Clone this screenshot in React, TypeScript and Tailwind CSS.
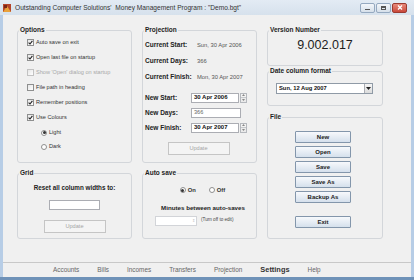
import React from "react";

const font = "font-['Liberation_Sans',Arial,sans-serif]";

const options = [
  { label: "Auto save on exit", checked: true },
  { label: "Open last file on startup", checked: true },
  { label: "Show 'Open' dialog on startup", checked: false, disabled: true },
  { label: "File path in heading", checked: false },
  { label: "Remember positions", checked: true },
  { label: "Use Colours", checked: true },
];

const tabs = ["Accounts", "Bills", "Incomes", "Transfers", "Projection", "Settings", "Help"];

const fileButtons = ["New", "Open", "Save", "Save As", "Backup As"];

export default function App() {
  return (
    <div className={`flex h-[280px] w-[414px] flex-col overflow-hidden bg-[#b7cde6] ${font}`}>
      <TitleBar />
      <div className="mx-[3px] flex flex-1 flex-col bg-[#f0f0f0]">
        <div className="flex flex-1 gap-[10px] pl-[14px] pt-[10px]">
          <div className="flex w-[115px] flex-col gap-[5px]">
            <Group title="Options" className="h-[138px]">
              <div className="flex flex-col">
                {options.map((o) => (
                  <div key={o.label} className="flex h-[15px] items-center gap-[2px] pl-[9px]">
                    <CheckBox checked={o.checked} disabled={o.disabled} />
                    <span className={`text-[5.6px] ${o.disabled ? "text-[#a8a8a8]" : "text-[#333]"}`}>
                      {o.label}
                    </span>
                  </div>
                ))}
                <div className="flex h-[15px] items-center gap-[2px] pl-[23px]">
                  <Radio checked />
                  <span className="text-[5.6px] text-[#333]">Light</span>
                </div>
                <div className="flex h-[13px] items-center gap-[2px] pl-[23px]">
                  <Radio />
                  <span className="text-[5.6px] text-[#333]">Dark</span>
                </div>
              </div>
            </Group>
            <Group title="Grid" className="h-[71px]">
              <div className="flex flex-col items-center">
                <span className="mt-[5px] text-[6.3px] leading-[10px] font-bold text-[#222]">
                  Reset all column widths to:
                </span>
                <div className="mt-[7px] h-[10px] w-[51px] border border-[#abadb3] bg-white" />
                <DisabledButton label="Update" />
              </div>
            </Group>
          </div>

          <div className="flex w-[115px] flex-col gap-[5px]">
            <Group title="Projection" className="h-[138px]">
              <div className="grid grid-cols-[46px_1fr] pl-[2px] pt-[2px]">
                <Label>Current Start:</Label>
                <Value>Sun, 30 Apr 2006</Value>
                <Label>Current Days:</Label>
                <Value>366</Value>
                <Label>Current Finish:</Label>
                <Value>Mon, 30 Apr 2007</Value>
              </div>
              <div className="mt-[5px] grid grid-cols-[46px_1fr] pl-[2px]">
                <Label short>New Start:</Label>
                <div className="flex h-[15px] items-center">
                  <DateInput value="30 Apr 2006" />
                </div>
                <Label short>New Days:</Label>
                <div className="flex h-[15px] items-center">
                  <div className="flex h-[10px] w-[50px] items-center border border-[#abadb3] bg-white pl-[2px] text-[5.6px] text-[#666]">
                    366
                  </div>
                </div>
                <Label short>New Finish:</Label>
                <div className="flex h-[15px] items-center">
                  <DateInput value="30 Apr 2007" />
                </div>
              </div>
              <div className="flex justify-center pr-[2px]">
                <div className="mt-[7px] flex h-[13px] w-[62px] items-center justify-center border border-[#c5c5c5] bg-[#f4f4f4] text-[5.6px] text-[#a5a5a5]">
                  Update
                </div>
              </div>
            </Group>
            <Group title="Auto save" className="h-[71px]">
              <div className="flex flex-col items-center">
                <div className="mt-[8px] flex items-center gap-[13px] pl-[6px]">
                  <div className="flex items-center gap-[2px]">
                    <Radio checked />
                    <span className="text-[5.8px] font-bold text-[#333]">On</span>
                  </div>
                  <div className="flex items-center gap-[2px]">
                    <Radio />
                    <span className="text-[5.8px] font-bold text-[#333]">Off</span>
                  </div>
                </div>
                <span className="mt-[9px] pl-[7px] text-[6.2px] leading-[8px] font-bold text-[#222]">
                  Minutes between auto-saves
                </span>
                <div className="mt-[4px] flex items-center gap-[4px] self-start pl-[12px]">
                  <div className="flex h-[10px] w-[42px] items-center justify-end border border-[#d2d4d8] bg-white pr-[1px]">
                    <span className="text-[4px] leading-[4px] text-[#c0c0c0]">⇕</span>
                  </div>
                  <span className="text-[4.6px] text-[#444]">(Turn off to edit)</span>
                </div>
              </div>
            </Group>
          </div>

          <div className="flex w-[116px] flex-col">
            <Group title="Version Number" className="h-[41px]">
              <div className="flex justify-center pt-[2px] text-[12.5px] leading-[16px] text-[#1d1d1d]">
                9.002.017
              </div>
            </Group>
            <Group title="Date column format" className="h-[40px]">
              <div className="mt-[7px] ml-[8px] flex h-[11px] w-[97px] items-center border border-[#8f9aa6] bg-white">
                <span className="flex-1 pl-[2px] text-[5.8px] font-bold text-[#111]">Sun, 12 Aug 2007</span>
                <span className="flex h-full w-[8px] items-center justify-center border-l border-[#abadb3] bg-gradient-to-b from-[#f5f5f5] to-[#dcdcdc]">
                  <svg width="5" height="3" viewBox="0 0 5 3">
                    <path d="M0 0h5L2.5 3z" fill="#222" />
                  </svg>
                </span>
              </div>
            </Group>
            <Group title="File" className="mt-[6px] h-[127px]">
              <div className="flex flex-col items-center gap-[3px] pt-[9px] pr-[4px]">
                {fileButtons.map((b) => (
                  <BlueButton key={b} label={b} />
                ))}
                <div className="mt-[10px]">
                  <BlueButton label="Exit" />
                </div>
              </div>
            </Group>
          </div>
        </div>

        <div className="flex h-[15px] items-center gap-[18px] border-t border-[#c8c8c8] pl-[50px]">
          {tabs.map((t) =>
            t === "Settings" ? (
              <span key={t} className="text-[7.4px] font-bold text-[#333]">
                {t}
              </span>
            ) : (
              <span key={t} className="text-[6.4px] text-[#666]">
                {t}
              </span>
            )
          )}
        </div>
      </div>
      <div className="h-[3px] bg-[#6f92b8]" />
    </div>
  );
}

function TitleBar() {
  return (
    <div className="flex h-[15px] items-center bg-gradient-to-b from-[#e3ebf4] to-[#d6e1ec] pl-[3px] pr-[7px]">
      <svg width="8" height="8" viewBox="0 0 8 8" className="shrink-0">
        <rect width="8" height="8" fill="#b5452a" />
        <path d="M0 8L4 2l4 6z" fill="#e9a23b" />
        <rect x="1" y="1" width="3" height="3" fill="#7a2818" />
      </svg>
      <span className="ml-[4px] flex-1 text-[6.6px] text-[#333] whitespace-pre">
        Outstanding Computer Solutions'  Money Management Program : "Demo.bgt"
      </span>
      <div className="flex items-center gap-[1px]">
        <div className="flex h-[10px] w-[15px] items-end justify-center rounded-[2px] border border-[#95a9c0] bg-gradient-to-b from-[#f3f6fa] to-[#d6e0ea] pb-[2px]">
          <div className="h-[1px] w-[5px] bg-[#555]" />
        </div>
        <div className="flex h-[10px] w-[15px] items-center justify-center rounded-[2px] border border-[#95a9c0] bg-gradient-to-b from-[#f3f6fa] to-[#d6e0ea]">
          <div className="h-[4px] w-[5px] border border-t-2 border-[#555]" />
        </div>
        <div className="flex h-[10px] w-[15px] items-center justify-center rounded-[2px] border border-[#9b3a30] bg-gradient-to-b from-[#e88a7c] to-[#c9473a]">
          <svg width="6" height="5" viewBox="0 0 6 5">
            <path d="M1 0.5l4 4M5 0.5l-4 4" stroke="#fff" strokeWidth="1.3" />
          </svg>
        </div>
      </div>
    </div>
  );
}

function Group({
  title,
  className,
  children,
}: {
  title: string;
  className?: string;
  children: React.ReactNode;
}) {
  return (
    <fieldset className={`rounded-[3px] border border-[#d3d6da] ${className ?? ""}`}>
      <legend className="ml-[1px] px-[1px] text-[6.5px] leading-[10px] font-bold text-[#1e1e1e]">
        {title}
      </legend>
      {children}
    </fieldset>
  );
}

function Label({ children, short }: { children: React.ReactNode; short?: boolean }) {
  return (
    <span className={`flex items-center whitespace-nowrap text-[6.5px] font-bold text-[#222] ${short ? "h-[15px]" : "h-[16px]"}`}>
      {children}
    </span>
  );
}

function Value({ children }: { children: React.ReactNode }) {
  return <span className="flex h-[16px] items-center pl-[6px] text-[5.8px] text-[#555]">{children}</span>;
}

function DateInput({ value }: { value: string }) {
  return (
    <div className="flex items-center">
      <div className="flex h-[10px] w-[48px] items-center border border-[#abadb3] bg-white pl-[2px] text-[6px] font-bold text-[#111]">
        {value}
      </div>
      <div className="ml-[1px] flex h-[10px] w-[7px] flex-col border border-[#b5b8bd]">
        <span className="flex flex-1 items-center justify-center border-b border-[#c7c9cc] bg-[#f3f3f3]">
          <svg width="3" height="2" viewBox="0 0 3 2">
            <path d="M0 2L1.5 0L3 2z" fill="#888" />
          </svg>
        </span>
        <span className="flex flex-1 items-center justify-center bg-[#ebebeb]">
          <svg width="3" height="2" viewBox="0 0 3 2">
            <path d="M0 0h3L1.5 2z" fill="#888" />
          </svg>
        </span>
      </div>
    </div>
  );
}

function DisabledButton({ label }: { label: string }) {
  return (
    <div className="mt-[10px] flex h-[13px] w-[62px] items-center justify-center border border-[#c5c5c5] bg-[#f4f4f4] text-[5.6px] text-[#a5a5a5]">
      {label}
    </div>
  );
}

function BlueButton({ label }: { label: string }) {
  return (
    <div className="flex h-[12px] w-[56px] items-center justify-center rounded-[1px] border border-[#8396ab] bg-gradient-to-b from-[#f7f9fc] to-[#d5e0ec] text-[6px] font-bold text-[#222]">
      {label}
    </div>
  );
}

function CheckBox({ checked, disabled }: { checked?: boolean; disabled?: boolean }) {
  return (
    <span
      className={`flex h-[7px] w-[7px] items-center justify-center border bg-gradient-to-br from-[#e6e6e6] to-white ${
        disabled ? "border-[#c2c2c2]" : "border-[#8e8f8f]"
      }`}
    >
      {checked && (
        <svg width="5" height="5" viewBox="0 0 5 5">
          <path d="M0.6 2.6L2 4L4.4 0.8" stroke="#222" strokeWidth="1.1" fill="none" />
        </svg>
      )}
    </span>
  );
}

function Radio({ checked }: { checked?: boolean }) {
  return (
    <span className="flex h-[6px] w-[6px] items-center justify-center rounded-full border border-[#8e8f8f] bg-white">
      {checked && <span className="h-[3px] w-[3px] rounded-full bg-[#333]" />}
    </span>
  );
}
